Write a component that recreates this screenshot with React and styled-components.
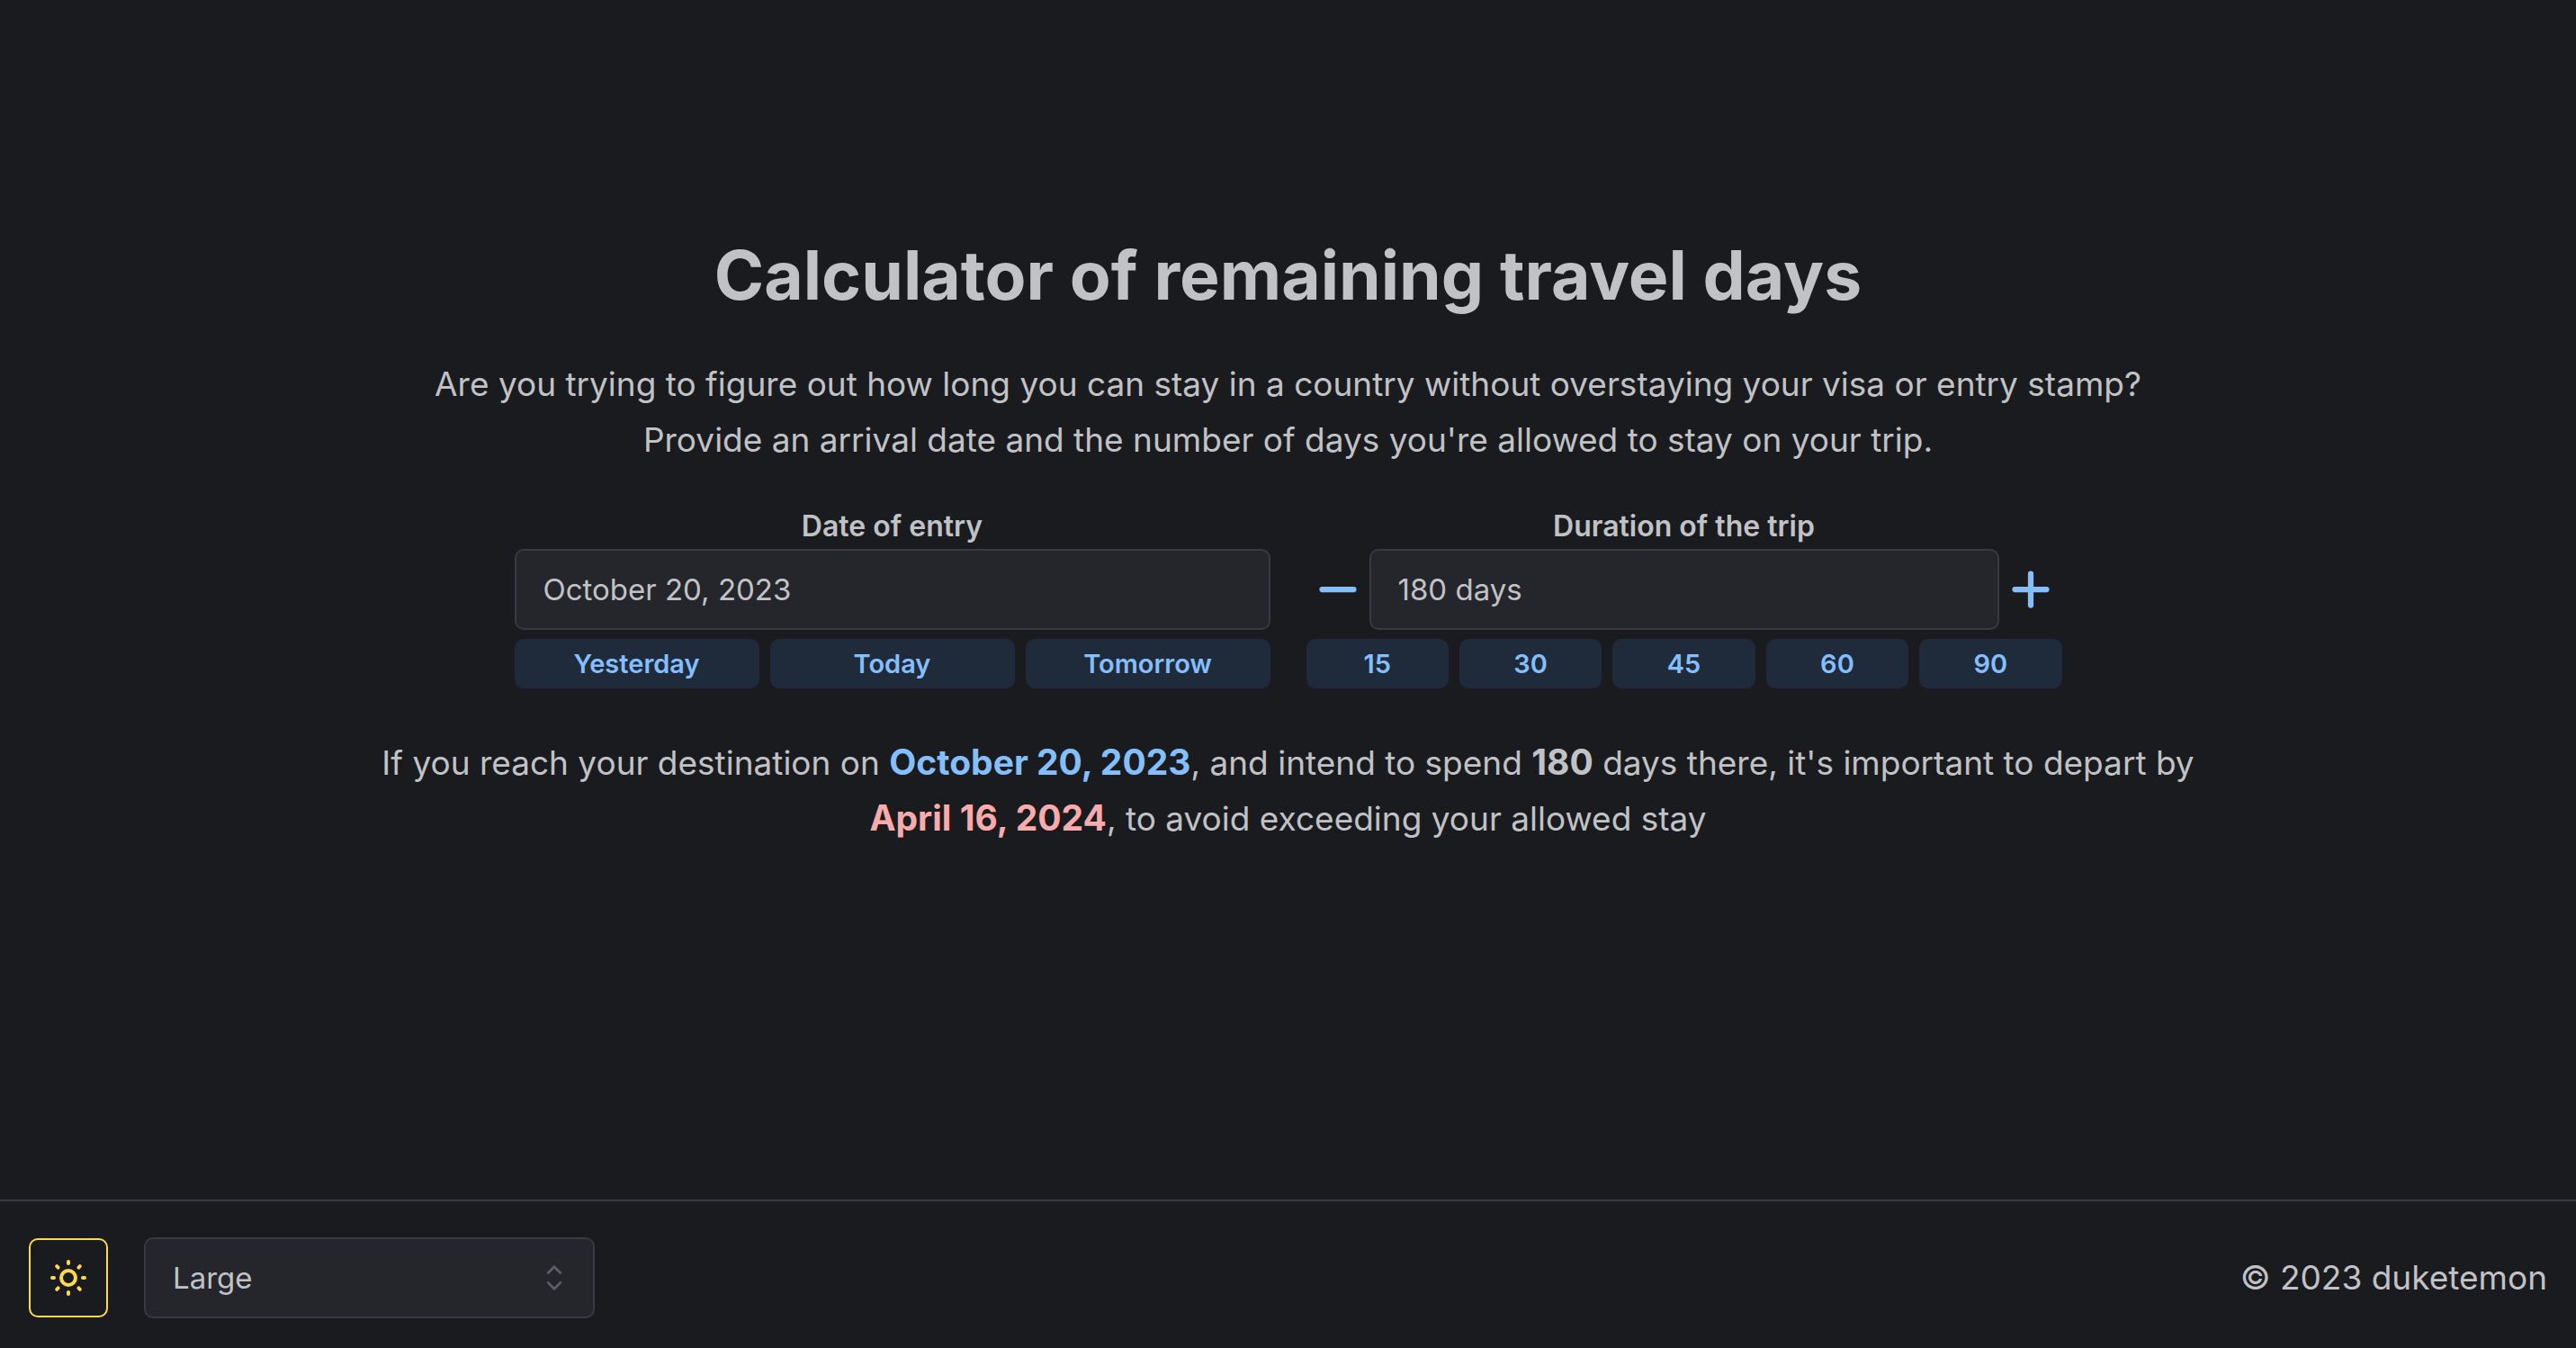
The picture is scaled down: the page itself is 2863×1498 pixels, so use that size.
import React, { useState } from "react";
import styled, { createGlobalStyle } from "styled-components";

const GlobalStyle = createGlobalStyle`
  *, *::before, *::after { box-sizing: border-box; }
  body {
    margin: 0;
    background: #1a1b1e;
    color: #c1c2c5;
    font-family: Inter, "Liberation Sans", sans-serif;
    font-size: 37px;
    line-height: 62px;
  }
  button, input, select { font-family: inherit; }
`;

const Page = styled.div`
  min-height: 100vh;
  display: flex;
  flex-direction: column;
`;

const Main = styled.main`
  flex: 1;
  display: flex;
  flex-direction: column;
  align-items: center;
  justify-content: center;
  padding: 32px;
  text-align: center;
`;

const Content = styled.div`
  width: 100%;
  max-width: 2040px;
  display: flex;
  flex-direction: column;
  align-items: center;
  padding-bottom: 138px;
`;

const Title = styled.h1`
  margin: 0 0 38px;
  font-size: 75px;
  line-height: 104px;
  font-weight: 700;
`;

const Text = styled.p`
  margin: 0;
`;

const Form = styled.form`
  width: 100%;
  max-width: 1720px;
  display: grid;
  grid-template-columns: 1fr 1fr;
  gap: 40px;
  margin: 40px 0 52px;
`;

const Field = styled.div`
  display: flex;
  flex-direction: column;
  min-width: 0;
`;

const Label = styled.label`
  font-size: 32px;
  line-height: 50px;
  font-weight: 600;
`;

const InputRow = styled.div`
  display: flex;
  align-items: center;
`;

const Input = styled.input`
  flex: 1;
  min-width: 0;
  height: 90px;
  padding: 0 30px;
  border: 2px solid #373a40;
  border-radius: 10px;
  background: #25262b;
  color: #c1c2c5;
  font-size: 33px;
`;

const StepButton = styled.button`
  width: 70px;
  height: 70px;
  padding: 0;
  border: 0;
  background: transparent;
  color: #84bffb;
  display: flex;
  align-items: center;
  justify-content: center;
`;

const Presets = styled.div`
  display: flex;
  gap: 12px;
  margin-top: 10px;
`;

const PresetButton = styled.button`
  flex: 1 1 0;
  height: 55px;
  padding: 0;
  border: 0;
  border-radius: 10px;
  background: #1f2b3b;
  color: #84bffb;
  font-size: 29px;
  font-weight: 600;
`;

const Mark = styled.strong`
  font-size: 39px;
  line-height: 1;
  font-weight: 700;
  color: ${(p) => p.$color || "inherit"};
`;

const Footer = styled.footer`
  display: flex;
  align-items: center;
  gap: 40px;
  padding: 40px 32px 33px;
  border-top: 2px solid #373a40;
`;

const ThemeButton = styled.button`
  width: 88px;
  height: 88px;
  padding: 0;
  border: 2px solid #ffd84f;
  border-radius: 10px;
  background: transparent;
  color: #ffd84f;
  display: flex;
  align-items: center;
  justify-content: center;
`;

const SelectBox = styled.div`
  display: grid;
  align-items: center;
  width: 501px;
`;

const Select = styled.select`
  grid-area: 1 / 1;
  appearance: none;
  width: 100%;
  height: 90px;
  padding: 0 30px;
  border: 2px solid #373a40;
  border-radius: 10px;
  background: #25262b;
  color: #c1c2c5;
  font-size: 33px;
`;

const Caret = styled.svg`
  grid-area: 1 / 1;
  justify-self: end;
  margin-right: 22px;
  pointer-events: none;
`;

const Copyright = styled.span`
  margin-left: auto;
`;

const Stroke = ({ size, width, d, children }) => (
  <svg width={size} height={size} viewBox="0 0 24 24" fill="none" stroke="currentColor"
    strokeWidth={width} strokeLinecap="round" strokeLinejoin="round" aria-hidden="true">
    {children}
    <path d={d} />
  </svg>
);

const SUN_RAYS =
  "M3 12h1m8 -9v1m8 8h1m-9 8v1m-6.4 -15.4l.7 .7m12.1 -.7l-.7 .7m0 11.4l.7 .7m-12.1 -.7l-.7 .7";

export default function App() {
  const [date, setDate] = useState("October 20, 2023");
  const [days, setDays] = useState(180);

  return (
    <>
      <GlobalStyle />
      <Page>
        <Main>
          <Content>
            <Title>Calculator of remaining travel days</Title>
            <Text>
              Are you trying to figure out how long you can stay in a country without overstaying your visa or entry stamp?
            </Text>
            <Text>Provide an arrival date and the number of days you're allowed to stay on your trip.</Text>
            <Form onSubmit={(e) => e.preventDefault()}>
              <Field>
                <Label htmlFor="entry">Date of entry</Label>
                <InputRow>
                  <Input id="entry" value={date} onChange={(e) => setDate(e.target.value)} />
                </InputRow>
                <Presets>
                  {[["Yesterday", 19], ["Today", 20], ["Tomorrow", 21]].map(([name, day]) => (
                    <PresetButton key={name} type="button" onClick={() => setDate(`October ${day}, 2023`)}>
                      {name}
                    </PresetButton>
                  ))}
                </Presets>
              </Field>
              <Field>
                <Label htmlFor="duration">Duration of the trip</Label>
                <InputRow>
                  <StepButton type="button" aria-label="Decrease" onClick={() => setDays(days - 1)}>
                    <Stroke size={60} width={2.5} d="M5 12h14" />
                  </StepButton>
                  <Input
                    id="duration"
                    value={`${days} days`}
                    onChange={(e) => setDays(parseInt(e.target.value, 10) || 0)}
                  />
                  <StepButton type="button" aria-label="Increase" onClick={() => setDays(days + 1)}>
                    <Stroke size={60} width={2.5} d="M12 5v14M5 12h14" />
                  </StepButton>
                </InputRow>
                <Presets>
                  {[15, 30, 45, 60, 90].map((n) => (
                    <PresetButton key={n} type="button" onClick={() => setDays(n)}>
                      {n}
                    </PresetButton>
                  ))}
                </Presets>
              </Field>
            </Form>
            <Text>
              If you reach your destination on <Mark $color="#84bffb">{date}</Mark>, and intend to spend{" "}
              <Mark>{days}</Mark> days there, it's important to depart by{" "}
              <Mark $color="#f9abab">April 16, 2024</Mark>, to avoid exceeding your allowed stay
            </Text>
          </Content>
        </Main>
        <Footer>
          <ThemeButton type="button" aria-label="Toggle color scheme">
            <Stroke size={48} width={2} d={SUN_RAYS}>
              <circle cx="12" cy="12" r="4" />
            </Stroke>
          </ThemeButton>
          <SelectBox>
            <Select aria-label="Size" defaultValue="Large">
              <option>Small</option>
              <option>Medium</option>
              <option>Large</option>
            </Select>
            <Caret width="46" height="46" viewBox="0 0 15 15" fill="#5c5f66" aria-hidden="true">
              <path
                fillRule="evenodd"
                clipRule="evenodd"
                d="M4.93179 5.43179C4.75605 5.60753 4.75605 5.89245 4.93179 6.06819C5.10753 6.24392 5.39245 6.24392 5.56819 6.06819L7.49999 4.13638L9.43179 6.06819C9.60753 6.24392 9.89245 6.24392 10.0682 6.06819C10.2439 5.89245 10.2439 5.60753 10.0682 5.43179L7.81819 3.18179C7.73379 3.0974 7.61933 3.04999 7.49999 3.04999C7.38064 3.04999 7.26618 3.0974 7.18179 3.18179L4.93179 5.43179ZM10.0682 9.56819C10.2439 9.39245 10.2439 9.10753 10.0682 8.93179C9.89245 8.75606 9.60753 8.75606 9.43179 8.93179L7.49999 10.8636L5.56819 8.93179C5.39245 8.75606 5.10753 8.75606 4.93179 8.93179C4.75605 9.10753 4.75605 9.39245 4.93179 9.56819L7.18179 11.8182C7.35753 11.9939 7.64245 11.9939 7.81819 11.8182L10.0682 9.56819Z"
              />
            </Caret>
          </SelectBox>
          <Copyright>© 2023 duketemon</Copyright>
        </Footer>
      </Page>
    </>
  );
}
